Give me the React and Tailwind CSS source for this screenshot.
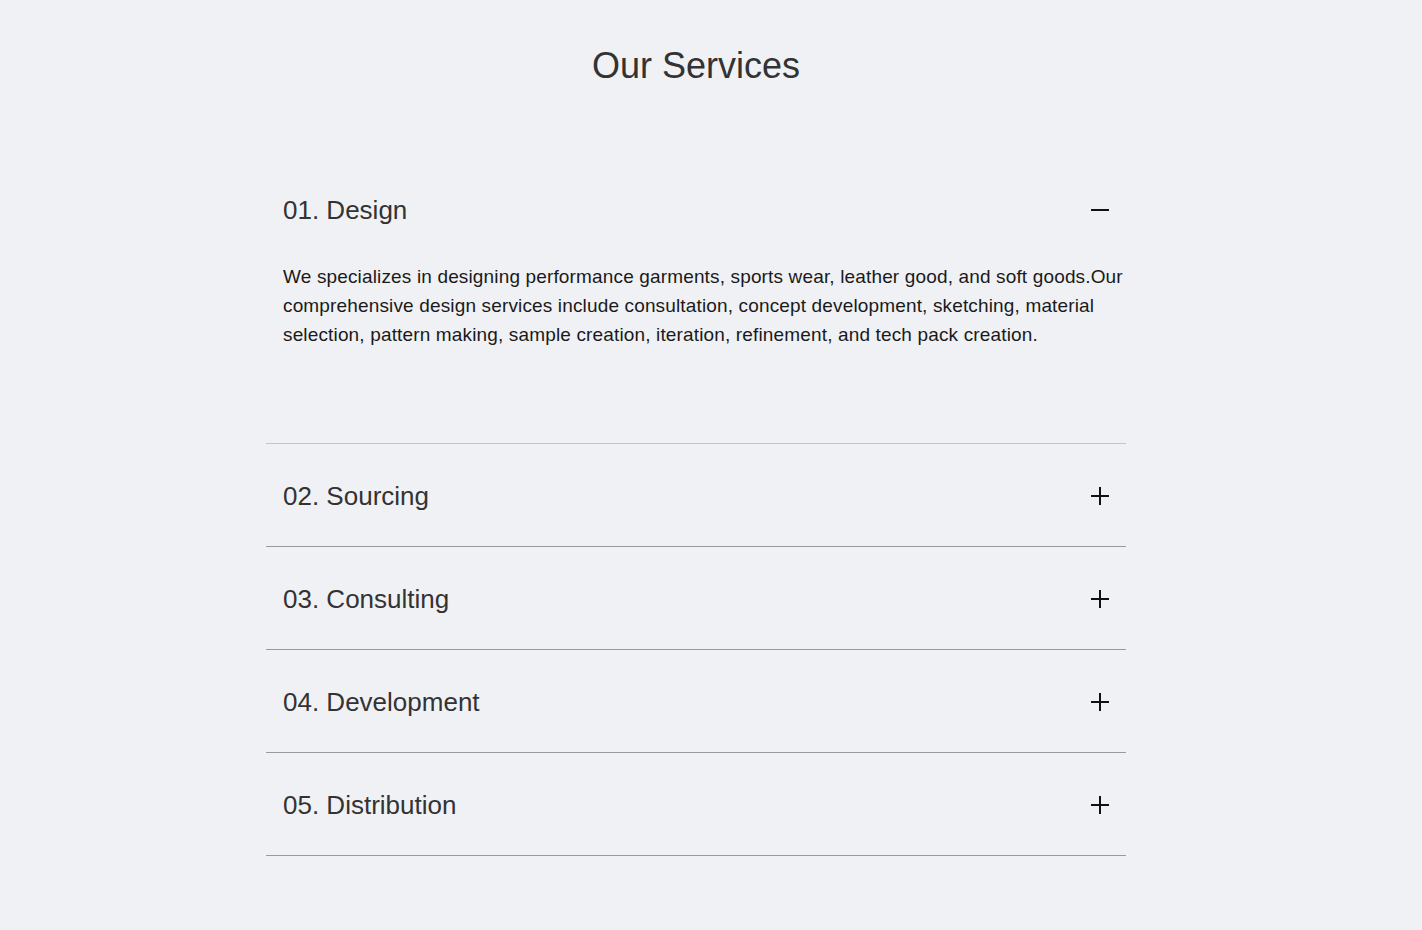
import React, { useState } from "react";

const items = [
  { n: "01. Design", body: "We specializes in designing performance garments, sports wear, leather good, and soft goods.Our comprehensive design services include consultation, concept development, sketching, material selection, pattern making, sample creation, iteration, refinement, and tech pack creation." },
  { n: "02. Sourcing" },
  { n: "03. Consulting" },
  { n: "04. Development" },
  { n: "05. Distribution" },
];

function Icon({ open }) {
  return (
    <svg width="20" height="20" viewBox="0 0 20 20" className="shrink-0">
      <path d="M1 10H19" stroke="#111" strokeWidth="2" />
      {!open && <path d="M10 1V19" stroke="#111" strokeWidth="2" />}
    </svg>
  );
}

export default function App() {
  const [open, setOpen] = useState(0);
  return (
    <div className="min-h-screen bg-[#f0f1f5]" style={{ fontFamily: '"Liberation Sans", Arial, sans-serif' }}>
      <div className="w-[1392px]">
        <h2 className="pt-[46px] text-center text-[36px] leading-[40px] font-normal text-[#333]">Our Services</h2>
        <div className="mx-auto mt-[71px] w-[860px]">
          {items.map((it, i) => (
            <div key={i} className={i === 0 ? "border-b border-[#c4c4c4]" : "border-b border-[#999]"}>
              <button
                onClick={() => setOpen(open === i ? -1 : i)}
                className={"flex w-full items-center justify-between pl-[17px] pr-[16px] text-left " + (i === 0 ? "h-[105px]" : "h-[102px] pt-[2px]")}
              >
                <span className="text-[26px] leading-[30px] text-[#333]">{it.n}</span>
                <Icon open={open === i} />
              </button>
              {open === i && it.body && (
                <p className="pl-[17px] pr-[2px] pb-[94px] text-[19px] leading-[29px] text-[#1a1a1a] tracking-[0.15px]">{it.body}</p>
              )}
            </div>
          ))}
        </div>
      </div>
    </div>
  );
}
